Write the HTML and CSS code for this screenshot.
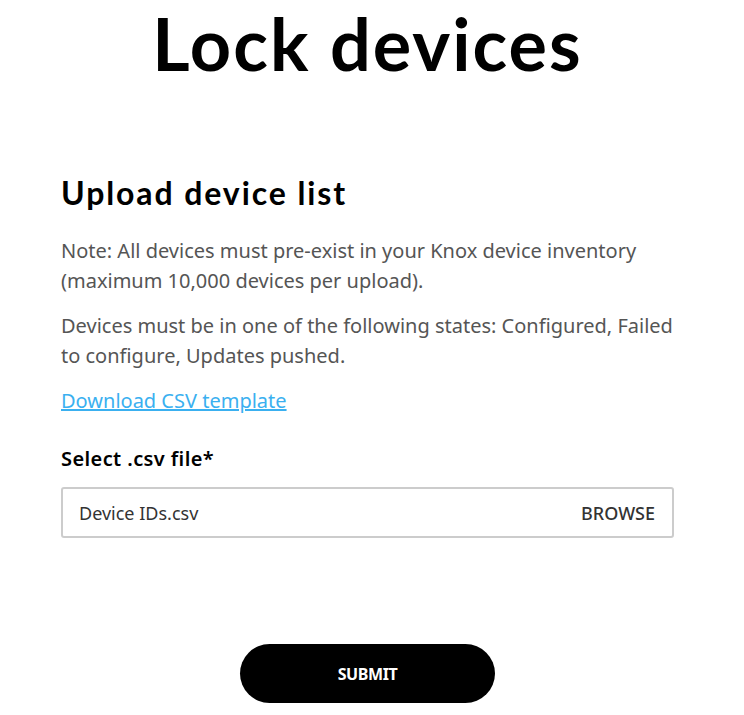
FILE: index.html
```html
<!DOCTYPE html>
<html lang="en">
<head>
<meta charset="utf-8">
<title>Lock devices</title>
<link rel="stylesheet" href="styles.css">
</head>
<body>
<main class="page">
  <h1 class="title">Lock devices</h1>
  <section class="panel">
    <h2 class="panel-title">Upload device list</h2>
    <p class="note">Note: All devices must pre-exist in your Knox device inventory (maximum 10,000 devices per upload).</p>
    <p class="note">Devices must be in one of the following states: Configured, Failed to configure, Updates pushed.</p>
    <a class="link" href="#">Download CSV template</a>
    <label class="field-label">Select .csv file*</label>
    <div class="file-input">
      <span class="file-name">Device IDs.csv</span>
      <span class="browse">BROWSE</span>
    </div>
  </section>
  <div class="actions">
    <button class="submit" type="button">SUBMIT</button>
  </div>
</main>
</body>
</html>
```

FILE: styles.css
```css
* { box-sizing: border-box; }
html, body { margin: 0; padding: 0; background: #fff; }
body { font-family: "Noto Sans", "Open Sans", sans-serif; color: #000; }
.page { padding: 0 70px 0 61px; }
.title {
  margin: 0;
  text-align: center;
  font-family: "Lato", sans-serif;
  font-weight: 700;
  font-size: 72px;
  line-height: 86px;
  letter-spacing: 2px;
}
.panel { padding-top: 87px; display: flex; flex-direction: column; align-items: flex-start; }
.panel-title {
  margin: 0 0 23px;
  font-family: "Lato", sans-serif;
  font-weight: 700;
  font-size: 32px;
  line-height: 40px;
  letter-spacing: 1.9px;
}
.note {
  margin: 0 0 15px;
  font-size: 20px;
  line-height: 30px;
  color: #555;
}
.link {
  font-size: 20px;
  line-height: 30px;
  color: #3ab0f0;
  text-decoration: underline;
}
.field-label {
  margin-top: 28px;
  font-size: 20px;
  line-height: 30px;
  font-weight: 600;
  letter-spacing: 0.4px;
  color: #000;
}
.file-input {
  margin-top: 13px;
  width: 613px;
  height: 51px;
  border: 2px solid #ccc;
  border-radius: 3px;
  display: flex;
  align-items: center;
  justify-content: space-between;
  padding: 0 17px 0 16px;
  font-size: 18px;
}
.file-name { color: #333; }
.browse { color: #333; font-weight: 500; font-size: 18px; }
.actions { display: flex; justify-content: center; padding-top: 106px; }
.submit {
  width: 255px;
  height: 59px;
  border: 0;
  border-radius: 30px;
  background: #000;
  color: #fff;
  font-family: "Noto Sans", sans-serif;
  font-weight: 700;
  font-size: 16px;
  letter-spacing: -0.4px;
}
```
